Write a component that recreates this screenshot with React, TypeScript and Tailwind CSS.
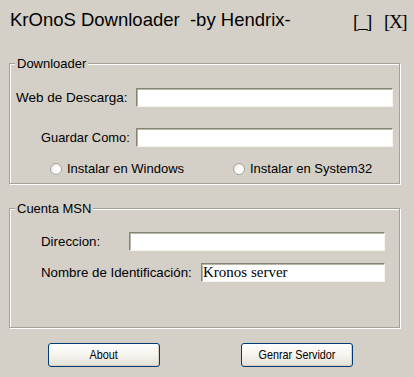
import React from "react";

const sans = { fontFamily: '"Liberation Sans", Arial, sans-serif' };

function Field({ w, value }: { w: string; value?: string }) {
  return (
    <div
      className={`${w} h-[19px] bg-white border border-t-[#858373] border-l-[#858373] border-r-[#f4f3ee] border-b-[#f4f3ee] shadow-[inset_1px_1px_0_#b9b7a9] flex items-center pl-[1px] text-[15px] leading-[17px] text-black`}
      style={{ fontFamily: '"Liberation Serif", "Times New Roman", serif' }}
    >
      {value}
    </div>
  );
}

function Radio({ label }: { label: string }) {
  return (
    <div className="flex items-center gap-[5px]">
      <span className="w-[12px] h-[12px] rounded-full border border-[#a7a69b] bg-[radial-gradient(circle_at_65%_65%,#ffffff_35%,#dedcd2_100%)]" />
      <span className="text-[13px] leading-[16px]">{label}</span>
    </div>
  );
}

function Group({ title, h, children }: { title: string; h: string; children: React.ReactNode }) {
  return (
    <div
      className={`relative ml-[9px] w-[391px] ${h} border border-[#a3a297] shadow-[inset_1px_1px_0_#ffffff,1px_1px_0_#ffffff]`}
    >
      <span className="absolute left-[5px] -top-[8px] px-[2px] bg-[#d4d0c8] text-[13px] leading-[16px]">
        {title}
      </span>
      {children}
    </div>
  );
}

function XpButton({ label, className = "" }: { label: string; className?: string }) {
  return (
    <button
      className={`w-[112px] h-[24px] rounded-[3px] border border-[#003c74] bg-gradient-to-b from-white via-[#f5f4ef] to-[#e3e1d6] shadow-[inset_-1px_-1px_0_#d6d0c5] flex items-center justify-center ${className}`}
    >
      <span className="inline-block text-[13.5px] leading-[16px] text-black scale-x-[0.8] whitespace-nowrap">
        {label}
      </span>
    </button>
  );
}

export default function App() {
  return (
    <div className="w-[414px] h-[377px] bg-[#d4d0c8] overflow-hidden text-black" style={sans}>
      {/* Title bar */}
      <div className="flex items-start pt-[9px] pl-[10px] h-[31px]">
        <div className="text-[18.5px] leading-[22px] whitespace-pre">KrOnoS Downloader  -by Hendrix-</div>
        <div
          className="ml-auto mr-[8px] mt-[2px] flex text-[19px] leading-[22px] tracking-[-1.5px]"
          style={{ fontFamily: '"Liberation Serif", "Times New Roman", serif' }}
        >
          <span className="w-[31px]">[_]</span>
          <span>[X]</span>
        </div>
      </div>

      {/* Downloader */}
      <div className="mt-[32px]">
        <Group title="Downloader" h="h-[121px]">
          <div className="flex items-center mt-[24px] pl-[6px]">
            <span className="w-[120px] text-[13.5px] leading-[16px]">Web de Descarga:</span>
            <Field w="w-[257px]" />
          </div>
          <div className="flex items-center mt-[21px] pl-[31px]">
            <span className="w-[95px] text-[12.9px] leading-[16px]">Guardar Como:</span>
            <Field w="w-[257px]" />
          </div>
          <div className="flex items-center mt-[14px] pl-[40px]">
            <div className="w-[183px]">
              <Radio label="Instalar en Windows" />
            </div>
            <Radio label="Instalar en System32" />
          </div>
        </Group>
      </div>

      {/* Cuenta MSN */}
      <div className="mt-[24px]">
        <Group title="Cuenta MSN" h="h-[120px]">
          <div className="flex items-center mt-[23px] pl-[31px]">
            <span className="w-[88px] text-[13.3px] leading-[16px]">Direccion:</span>
            <Field w="w-[256px]" />
          </div>
          <div className="flex items-center mt-[12px] pl-[31px]">
            <span className="w-[160px] text-[13.3px] leading-[16px]">Nombre de Identificación:</span>
            <Field w="w-[184px]" value="Kronos server" />
          </div>
        </Group>
      </div>

      {/* Buttons */}
      <div className="flex mt-[15px] pl-[48px] gap-[81px]">
        <XpButton label="About" />
        <XpButton label="Genrar Servidor" />
      </div>
    </div>
  );
}
